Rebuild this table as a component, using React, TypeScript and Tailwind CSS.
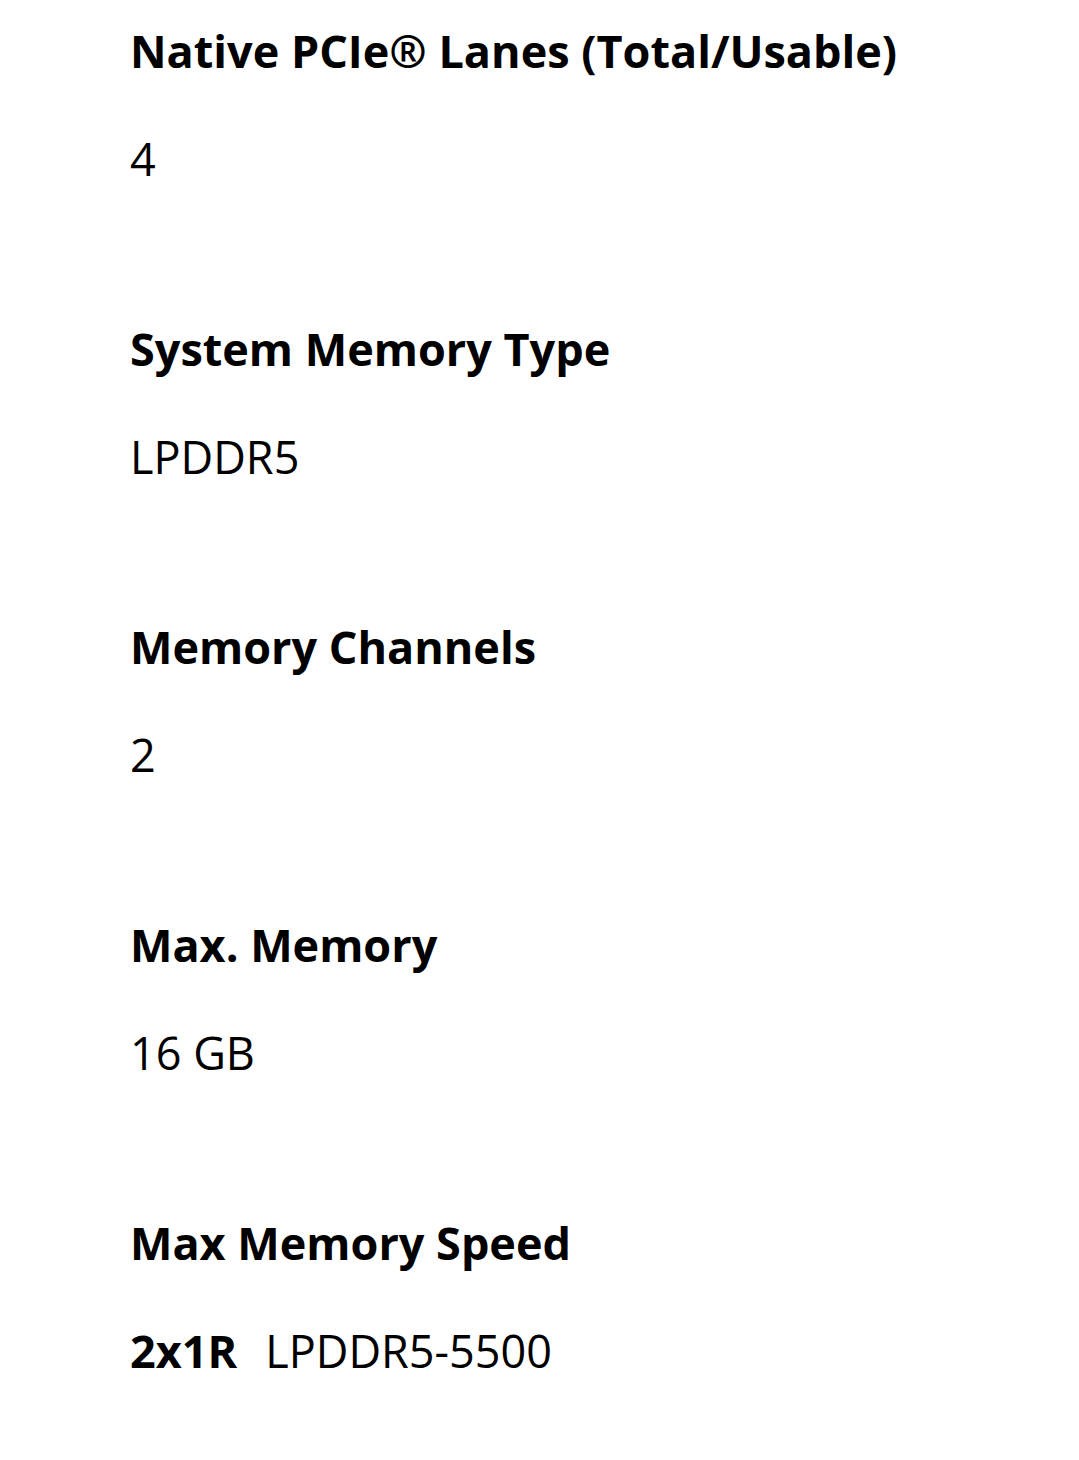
const specs = [
  { label: "Native PCIe® Lanes (Total/Usable)", value: "4" },
  { label: "System Memory Type", value: "LPDDR5" },
  { label: "Memory Channels", value: "2" },
  { label: "Max. Memory", value: "16 GB" },
  { label: "Max Memory Speed", value: "LPDDR5-5500", tag: "2x1R" },
];

export default function App() {
  return (
    <div
      className="min-h-[1460px] bg-white pl-[130px] pt-[21px] text-black"
      style={{ fontFamily: '"Open Sans", "Noto Sans", sans-serif' }}
    >
      {specs.map((s) => (
        <div key={s.label} className="mb-[130px]">
          <div className="mb-[48px] text-[45px] font-bold leading-[60px]">
            {s.label}
          </div>
          <div className="text-[45px] font-normal leading-[60px]">
            {s.tag && <span className="mr-[28px] font-bold">{s.tag}</span>}
            {s.value}
          </div>
        </div>
      ))}
    </div>
  );
}
